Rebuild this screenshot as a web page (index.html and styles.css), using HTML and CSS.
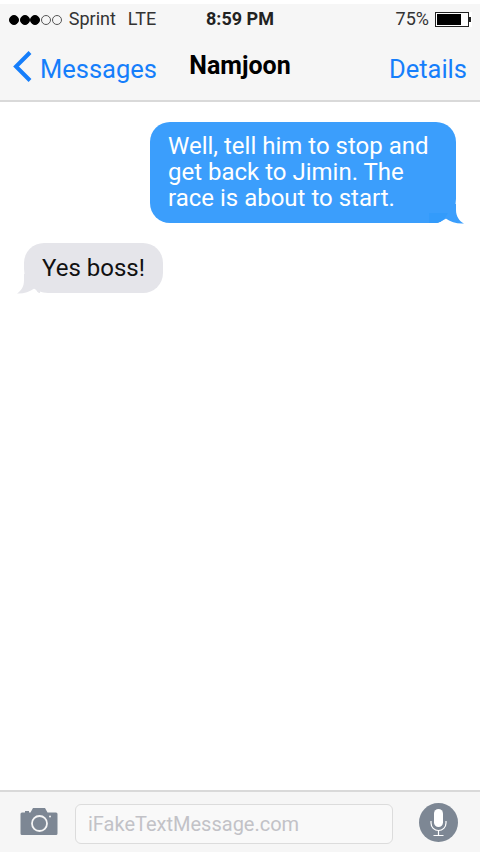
FILE: index.html
```html
<!DOCTYPE html>
<html lang="en">
<head>
<meta charset="utf-8">
<title>Namjoon</title>
<link rel="stylesheet" href="styles.css">
</head>
<body>
<div class="phone">
  <header class="top">
    <div class="status">
      <div class="status-left">
        <span class="dots"><i class="dot on"></i><i class="dot on"></i><i class="dot on"></i><i class="dot"></i><i class="dot"></i></span>
        <span class="carrier">Sprint</span>
        <span class="net">LTE</span>
      </div>
      <div class="clock">8:59 PM</div>
      <div class="status-right">
        <span class="pct">75%</span>
        <svg class="battery" width="37" height="15" viewBox="0 0 37 15">
          <rect x="0" y="0" width="37" height="15" fill="#fff"/>
          <rect x="0.5" y="0.5" width="33" height="14" fill="#fff" stroke="#222"/>
          <rect x="2" y="2" width="24" height="11" fill="#000"/>
          <rect x="34" y="5" width="2" height="5" fill="#222"/>
        </svg>
      </div>
    </div>
    <nav class="nav">
      <div class="back">
        <svg class="chevron" width="20" height="32" viewBox="0 0 20 32">
          <path d="M18 2.5 L4 16.5 L18 30.5" fill="none" stroke="#157efb" stroke-width="4"/>
        </svg>
        <span class="link">Messages</span>
      </div>
      <div class="title">Namjoon</div>
      <div class="link">Details</div>
    </nav>
  </header>

  <main class="thread">
    <div class="row row-out">
      <div class="bubble out">
        Well, tell him to stop and<br>get back to Jimin. The<br>race is about to start.
        <svg class="tail tail-out" width="36" height="20" viewBox="0 0 36 20">
          <path d="M0 0 H27 V6 C27 12 30 17 35 19.5 C28 20 22 18 16 14 C13 17 10 19 6 19 H0 Z" fill="#3b9efc"/>
          <path d="M0 9 H19 L16 14 C13 17 10 19 6 19 H0 Z" fill="#339bfb"/>
        </svg>
      </div>
    </div>
    <div class="row row-in">
      <div class="bubble in">
        Yes boss!
        <svg class="tail tail-in" width="24" height="20" viewBox="0 0 24 20">
          <path d="M24 0 H8 V6 C8 12 6 16 1 19.5 C7 20 13 18 19 14 C20.5 17 22 19 24 19 Z" fill="#e5e5ea"/>
        </svg>
      </div>
    </div>
  </main>

  <footer class="composer">
    <svg class="camera" width="38" height="28" viewBox="0 0 38 28">
      <path d="M2 5.5 H5 V4 H9 V5.5 H10.5 L13 1 H25 L27.5 5.5 H36 A1.5 1.5 0 0 1 37.5 7 V26.5 A1.5 1.5 0 0 1 36 28 H2 A1.5 1.5 0 0 1 0.5 26.5 V7 A1.5 1.5 0 0 1 2 5.5 Z" fill="#7d8794"/>
      <circle cx="19.5" cy="16.5" r="7.5" fill="none" stroke="#f5f5f5" stroke-width="1.8"/>
      <circle cx="30" cy="9.5" r="1" fill="#f5f5f5"/>
    </svg>
    <div class="input">iFakeTextMessage.com</div>
    <svg class="mic" width="39" height="39" viewBox="0 0 39 39">
      <circle cx="19.5" cy="19.5" r="19.5" fill="#7d8794"/>
      <rect x="15" y="6" width="9" height="18" rx="4.5" fill="#fff"/>
      <path d="M12 18 V20 A7.5 7.5 0 0 0 27 20 V18" fill="none" stroke="#fff" stroke-width="1.2"/>
      <path d="M19.5 27.5 V32 M14.5 32.5 H24.5" fill="none" stroke="#fff" stroke-width="1.2"/>
    </svg>
  </footer>
</div>
</body>
</html>
```
FILE: styles.css
```css
* { box-sizing: border-box; }
html, body { margin: 0; padding: 0; background: #fff; }
body { font-family: Roboto, "Liberation Sans", sans-serif; }

.phone {
  width: 480px;
  height: 852px;
  display: flex;
  flex-direction: column;
  overflow: hidden;
  background: #fff;
}

.top {
  margin-top: 4px;
  height: 98px;
  flex: none;
  background: #f6f6f6;
  border-bottom: 2px solid #d9d9d9;
  display: flex;
  flex-direction: column;
}

.status {
  height: 30px;
  padding: 0 8px 1px 9px;
  display: grid;
  grid-template-columns: 1fr auto 1fr;
  align-items: center;
  font-size: 18px;
  color: #333;
}
.status-left { display: flex; align-items: center; }
.dots { display: flex; gap: 0.7px; margin: 2px 7px 0 0; }
.dot {
  width: 10px;
  height: 10px;
  border-radius: 50%;
  border: 1px solid #555;
}
.dot.on { background: #000; border-color: #000; }
.carrier { margin-right: 12px; }
.clock { font-weight: 700; color: #222; margin-right: 1px; }
.status-right { display: flex; justify-content: flex-end; align-items: center; gap: 6px; }
.battery { display: block; margin-top: 2px; }

.nav {
  flex: 1;
  padding: 0 13px 0 12px;
  display: flex;
  align-items: center;
  justify-content: space-between;
}
.back { display: flex; align-items: center; gap: 8px; }
.chevron { display: block; margin-top: -2px; }
.link { font-size: 25.5px; color: #157efb; padding-top: 3px; }
.title { font-size: 25px; font-weight: 700; color: #000; margin: -3px 66px 0 0; }

.thread {
  flex: 1;
  padding: 20px 24px 0;
  display: flex;
  flex-direction: column;
  gap: 20px;
}
.row { display: flex; }
.row-out { justify-content: flex-end; }
.row-in { justify-content: flex-start; }

.bubble {
  position: relative;
  font-size: 24px;
  line-height: 26px;
  border-radius: 20px;
}
.out {
  background: #3b9efc;
  color: #fff;
  width: 306px;
  height: 101px;
  padding: 11px 18px;
  border-bottom-right-radius: 24px;
}
.in {
  background: #e5e5ea;
  color: #111;
  width: 139px;
  height: 50px;
  padding: 12px 18px;
  border-bottom-left-radius: 24px;
}
.tail { position: absolute; display: block; }
.tail-out { right: -9px; bottom: -1px; }
.tail-in { left: -8px; bottom: -1px; }

.composer {
  height: 62px;
  flex: none;
  background: #f6f6f6;
  border-top: 2px solid #d9d9d9;
  display: flex;
  align-items: center;
  padding: 0 22px 0 20px;
}
.camera { flex: none; margin-top: -3px; }
.input {
  width: 318px;
  height: 40px;
  margin: 3px 26px 0 17px;
  border: 1px solid #dcdcdc;
  border-radius: 6px;
  background: #f9f9f9;
  color: #c2c2c7;
  font-size: 20px;
  line-height: 38px;
  padding-left: 12px;
  flex: none;
}
.mic { flex: none; }
```
